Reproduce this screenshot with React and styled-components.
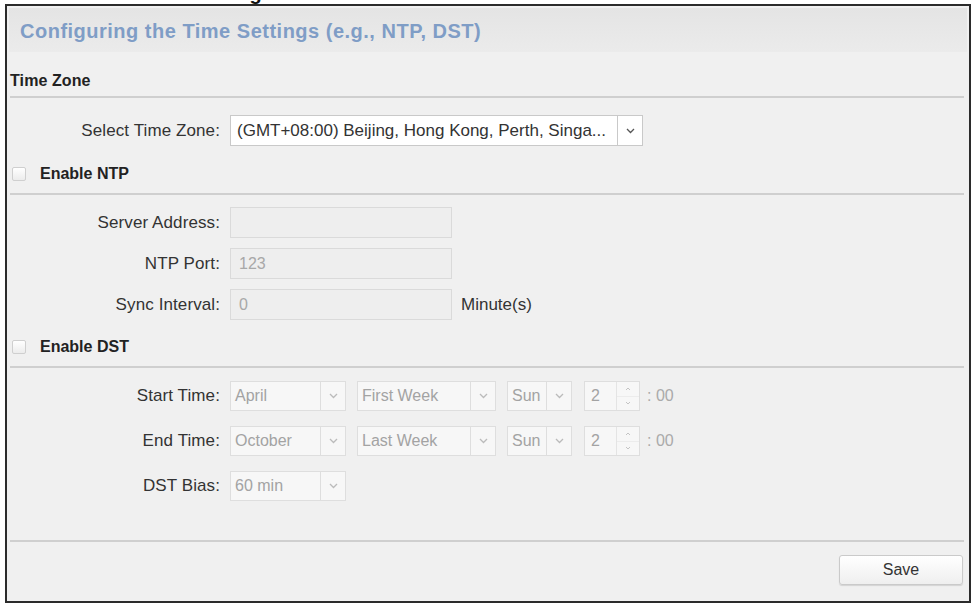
import React from "react";
import styled, { createGlobalStyle } from "styled-components";

const Global = createGlobalStyle`
  html, body { margin: 0; padding: 0; background: #ffffff; }
  body { font-family: "Liberation Sans", Arial, sans-serif; color: #333; }
  * { box-sizing: border-box; }
`;

const Page = styled.div`
  width: 973px;
  height: 604px;
  display: flex;
  flex-direction: column;
  overflow: hidden;
`;

const Caption = styled.div`
  height: 4px;
  overflow: hidden;
  padding-left: 142px;
`;

const CaptionText = styled.div`
  margin-top: -17px;
  font-size: 20px;
  font-weight: bold;
  color: #111;
  line-height: 20px;
`;

const Frame = styled.div`
  margin: 0 2px 1px 5px;
  height: 599px;
  border: 2px solid #2b2b2b;
  background: #f0f0f0;
  display: flex;
  flex-direction: column;
  padding: 2px 2px 0 2px;
`;

const Header = styled.div`
  height: 44px;
  background: linear-gradient(to bottom, #e4e4e4, #ebebeb);
  display: flex;
  align-items: center;
  padding: 2px 0 0 11px;
`;

const Title = styled.h1`
  margin: 0;
  font-size: 20px;
  font-weight: bold;
  color: #7f9dc6;
  letter-spacing: 0.5px;
`;

const Body = styled.div`
  flex: 1;
  display: flex;
  flex-direction: column;
  padding: 0 3px 0 1px;
`;

const SectionTitle = styled.div`
  height: 46px;
  padding-top: 14px;
  display: flex;
  align-items: center;
  border-bottom: 2px solid #cfcfcf;
  font-size: 16px;
  font-weight: bold;
  color: #222;
  letter-spacing: 0.1px;
`;

const CheckRow = styled.div`
  height: 41px;
  margin-top: ${(p) => p.$mt}px;
  display: flex;
  align-items: center;
  border-bottom: 2px solid #cfcfcf;
  font-size: 16px;
  font-weight: bold;
  color: #222;
`;

const Check = styled.span`
  width: 14px;
  height: 14px;
  margin: 0 14px 0 2px;
  border: 1px solid #cfcfcf;
  border-radius: 2px;
  background: linear-gradient(to bottom, #ffffff, #ececec);
`;

const Fields = styled.div`
  display: flex;
  flex-direction: column;
  gap: ${(p) => p.$gap}px;
  margin-top: ${(p) => p.$mt}px;
`;

const Row = styled.div`
  display: flex;
  align-items: center;
  height: ${(p) => p.$h}px;
`;

const Label = styled.div`
  width: 210px;
  margin-right: 10px;
  text-align: right;
  font-size: 17px;
  color: #333;
  letter-spacing: 0.1px;
`;

const Input = styled.div`
  width: 222px;
  height: 100%;
  border: 1px solid #dadada;
  background: #eeeeee;
  display: flex;
  align-items: center;
  padding-left: 8px;
  font-size: 16px;
  color: #a8a8a8;
`;

const Unit = styled.span`
  margin-left: 9px;
  font-size: 17px;
  color: #333;
`;

const Select = styled.div`
  width: ${(p) => p.$w}px;
  height: 100%;
  margin-right: ${(p) => p.$mr || 0}px;
  border: 1px solid ${(p) => (p.$enabled ? "#c9c9c9" : "#dedede")};
  background: ${(p) => (p.$enabled ? "#ffffff" : "#f7f7f7")};
  display: flex;
  align-items: stretch;
`;

const SelectText = styled.div`
  flex: 1;
  display: flex;
  align-items: center;
  padding-left: ${(p) => (p.$enabled ? 6 : 4)}px;
  font-size: ${(p) => (p.$enabled ? 17 : 16)}px;
  color: ${(p) => (p.$enabled ? "#333" : "#a3a3a3")};
  white-space: nowrap;
  overflow: hidden;
`;

const Arrow = styled.div`
  width: ${(p) => p.$w || 25}px;
  border-left: 1px solid ${(p) => (p.$enabled ? "#c9c9c9" : "#dedede")};
  display: flex;
  align-items: center;
  justify-content: center;
  color: ${(p) => (p.$enabled ? "#555" : "#bbb")};
`;

const Spinner = styled.div`
  width: 56px;
  height: 100%;
  border: 1px solid #dedede;
  background: #f7f7f7;
  display: flex;
`;

const SpinValue = styled.div`
  flex: 1;
  display: flex;
  align-items: center;
  padding-left: 6px;
  font-size: 16px;
  color: #a3a3a3;
`;

const SpinButtons = styled.div`
  width: 23px;
  border-left: 1px solid #e4e4e4;
  display: flex;
  flex-direction: column;
  color: #c4c4c4;
`;

const SpinBtn = styled.div`
  flex: 1;
  display: flex;
  align-items: center;
  justify-content: center;
  border-top: ${(p) => (p.$down ? "1px solid #ececec" : "none")};
`;

const Suffix = styled.span`
  margin-left: 7px;
  font-size: 16px;
  color: #aaa;
`;

const Footer = styled.div`
  margin-top: auto;
  border-top: 2px solid #cfcfcf;
  display: flex;
  justify-content: flex-end;
  padding: 13px 1px 16px 0;
`;

const Button = styled.button`
  width: 124px;
  height: 30px;
  border: 1px solid #cacaca;
  border-radius: 3px;
  background: linear-gradient(to bottom, #ffffff, #efefef);
  font-family: "Liberation Sans", Arial, sans-serif;
  font-size: 16px;
  color: #333;
  box-shadow: 0 1px 1px rgba(0, 0, 0, 0.12);
`;

const Chevron = () => (
  <svg width="9" height="6" viewBox="0 0 9 6">
    <polyline points="1,1 4.5,4.5 8,1" fill="none" stroke="currentColor" strokeWidth="1.3" />
  </svg>
);

const Up = () => (
  <svg width="6" height="4" viewBox="0 0 6 4">
    <polyline points="1,3 3,1 5,3" fill="none" stroke="currentColor" strokeWidth="1" />
  </svg>
);

const Down = () => (
  <svg width="6" height="4" viewBox="0 0 6 4">
    <polyline points="1,1 3,3 5,1" fill="none" stroke="currentColor" strokeWidth="1" />
  </svg>
);

const Dropdown = ({ w, value, enabled, mr, aw }) => (
  <Select $w={w} $enabled={enabled} $mr={mr}>
    <SelectText $enabled={enabled}>{value}</SelectText>
    <Arrow $enabled={enabled} $w={aw}>
      <Chevron />
    </Arrow>
  </Select>
);

const TimeRow = ({ label, month, week }) => (
  <Row $h={30}>
    <Label>{label}</Label>
    <Dropdown w={116} value={month} mr={11} />
    <Dropdown w={139} value={week} mr={11} />
    <Dropdown w={65} value="Sun" mr={12} />
    <Spinner>
      <SpinValue>2</SpinValue>
      <SpinButtons>
        <SpinBtn><Up /></SpinBtn>
        <SpinBtn $down><Down /></SpinBtn>
      </SpinButtons>
    </Spinner>
    <Suffix>: 00</Suffix>
  </Row>
);

export default function App() {
  return (
    <Page>
      <Global />
      <Caption>
        <CaptionText>Time Settings</CaptionText>
      </Caption>
      <Frame>
        <Header>
          <Title>Configuring the Time Settings (e.g., NTP, DST)</Title>
        </Header>
        <Body>
          <SectionTitle>Time Zone</SectionTitle>
          <Fields $mt={17} $gap={0}>
            <Row $h={31}>
              <Label>Select Time Zone:</Label>
              <Dropdown
                w={413}
                enabled
                value="(GMT+08:00) Beijing, Hong Kong, Perth, Singa..."
              />
            </Row>
          </Fields>
          <CheckRow $mt={8}>
            <Check />
            Enable NTP
          </CheckRow>
          <Fields $mt={12} $gap={10}>
            <Row $h={31}>
              <Label>Server Address:</Label>
              <Input />
            </Row>
            <Row $h={31}>
              <Label>NTP Port:</Label>
              <Input>123</Input>
            </Row>
            <Row $h={31}>
              <Label>Sync Interval:</Label>
              <Input>0</Input>
              <Unit>Minute(s)</Unit>
            </Row>
          </Fields>
          <CheckRow $mt={7}>
            <Check />
            Enable DST
          </CheckRow>
          <Fields $mt={13} $gap={15}>
            <TimeRow label="Start Time:" month="April" week="First Week" />
            <TimeRow label="End Time:" month="October" week="Last Week" />
            <Row $h={30}>
              <Label>DST Bias:</Label>
              <Dropdown w={116} value="60 min" />
            </Row>
          </Fields>
          <Footer>
            <Button>Save</Button>
          </Footer>
        </Body>
      </Frame>
    </Page>
  );
}
